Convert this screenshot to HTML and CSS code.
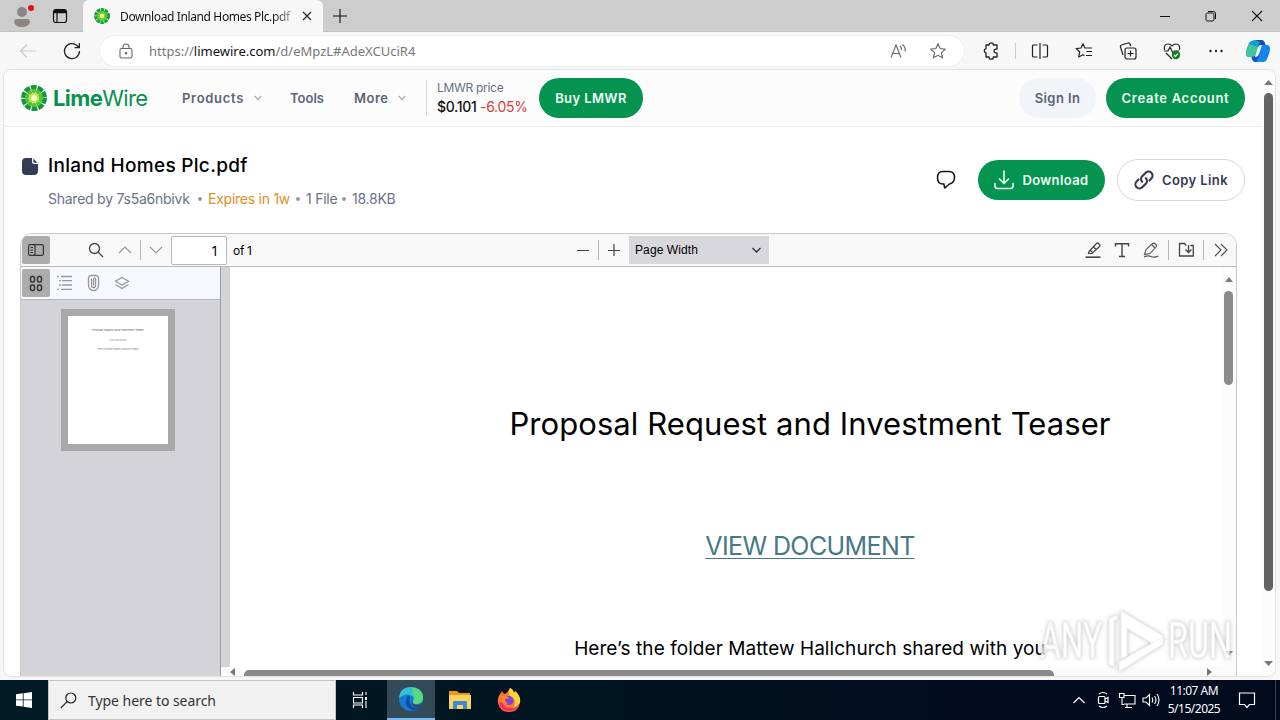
FILE: index.html
```html
<!DOCTYPE html>
<html lang="en">
<head>
    <meta charset="UTF-8">
    <meta name="viewport" content="width=device-width, initial-scale=1.0">
    <title>Download Inland Homes Plc.pdf</title>
    <link rel="stylesheet" href="styles.css">
</head>
<body>

    <!-- Tab strip -->
    <div class="tabstrip">
        <svg class="profile" width="24" height="26" viewBox="0 0 24 26"><circle cx="11" cy="9" r="5" fill="#8b8583"/><path d="M3 19q0-3 3-3h10q3 0 3 3-1 5-8 5t-8-5z" fill="#8b8583"/><circle cx="20" cy="5" r="3" fill="#e0101c"/></svg>
        <svg class="tab-menu" width="16" height="16" viewBox="0 0 16 16" fill="none" stroke="#111" stroke-width="1.2"><rect x="1.5" y="1.5" width="13" height="13" rx="2.5"/><path d="M5 5v9" /><path d="M2 3.500h12" stroke-width="3.500"/></svg>
        <div class="tab">
            <svg class="lime" width="16" height="16" viewBox="0 0 26 26"><circle cx="13" cy="13" r="10" fill="#c8ee90"/><circle cx="13" cy="13" r="9.500" fill="none" stroke="#18a03f" stroke-width="7" stroke-dasharray="4.970 1"/><circle cx="13" cy="13" r="6" fill="none" stroke="#5ccb1c" stroke-width="5" stroke-dasharray="2.970 .8"/><circle cx="13" cy="13" r="3.500" fill="#f0f79a"/></svg>
            <span class="tab-title">Download Inland Homes Plc.pdf</span>
            <svg width="10" height="10" viewBox="0 0 10 10" stroke="#222" stroke-width="1.2"><path d="M1 1l8 8M9 1l-8 8"/></svg>
        </div>
        <svg class="new-tab" width="14" height="14" viewBox="0 0 14 14" stroke="#111" stroke-width="1.1"><path d="M7 0v14M0 7h14"/></svg>
        <div class="window-buttons">
            <svg width="12" height="12" viewBox="0 0 12 12" fill="none" stroke="#111"><path d="M1 6.500h10"/></svg>
            <svg width="12" height="12" viewBox="0 0 12 12" fill="none" stroke="#111"><rect x="1" y="3" width="8" height="8" rx="1.500"/><path d="M3 1.500h5.500a2 2 0 0 1 2 2v5.500"/></svg>
            <svg width="12" height="12" viewBox="0 0 12 12" fill="none" stroke="#111" stroke-width="1.1"><path d="M1 1l10 10M11 1L1 11"/></svg>
        </div>
    </div>

    <!-- Address bar -->
    <div class="toolbar">
        <svg class="back" width="18" height="16" viewBox="0 0 18 16" fill="none" stroke="#c9c9c9" stroke-width="1.2"><path d="M17 8H1.500M8 1.500L1.500 8L8 14.500"/></svg>
        <svg class="reload" width="18" height="18" viewBox="0 0 18 18" fill="none" stroke="#222" stroke-width="1.3"><path d="M16.500 9A7.500 7.500 0 1 1 14 3.500L16 5.500M16.300 1v4.700h-4.700"/></svg>
        <div class="address">
            <svg width="14" height="16" viewBox="0 0 14 16" fill="none" stroke="#666" stroke-width="1.1"><rect x="1" y="5.500" width="12" height="9.500" rx="1.500"/><path d="M4 5.500V4a3 3 0 0 1 6 0v1.500"/><circle cx="7" cy="10.300" r=".7" fill="#666"/></svg>
            <span class="url">https://<b>limewire.com</b>/d/eMpzL#AdeXCUciR4</span>
            <svg class="read" width="17" height="16" viewBox="0 0 17 16" fill="none" stroke="#666" stroke-width="1.1"><path d="M1 14.500L6 2l5 12.500M2.800 10.500h6.400M10 3q2 1.500 1.500 4M12.500 1.500q3.500 3 2.500 7"/></svg>
            <svg width="16" height="16" viewBox="0 0 16 16" fill="none" stroke="#666" stroke-width="1.1"><path d="M8 .8l2.200 4.700 5.100.6-3.800 3.500 1 5.200L8 12.300l-4.500 2.500 1-5.200L.7 6.100l5.100-.6z"/></svg>
        </div>
        <div class="tools">
            <svg width="18" height="18" viewBox="0 0 18 18" fill="none" stroke="#222" stroke-width="1.3" stroke-linejoin="round"><path d="M4 3h3a2.200 2.200 0 0 1 4.400 0H15v4.200h-1.200a1.800 1.800 0 0 0 0 3.600H15V15h-3.600a2.200 2.200 0 0 1-4.400 0H4v-4a2.200 2.200 0 0 1 0-4.300z"/></svg>
            <i class="tool-line"></i>
            <svg width="18" height="18" viewBox="0 0 18 18" fill="none" stroke="#222" stroke-width="1.2"><path d="M6.500 3h-4q-1 0-1 1v10q0 1 1 1h4M11.500 3h4q1 0 1 1v10q0 1-1 1h-4M9 1v16"/></svg>
            <svg width="18" height="18" viewBox="0 0 18 18" fill="none" stroke="#222" stroke-width="1.2" stroke-linejoin="round"><path d="M11 6h-1.200L8 1.800 6 6l-4.800.6 3.500 3.400-1 5L8 12.700l1.500.9M11 6h6M11.500 9.500H17M11 13.500h6"/></svg>
            <svg width="18" height="18" viewBox="0 0 18 18" fill="none" stroke="#222" stroke-width="1.2"><rect x="6" y="6" width="11" height="11" rx="2"/><path d="M11.500 8.500v6M8.500 11.500h6M4 13L1.500 5Q1 3.500 2.500 3L9 1q1.500-.5 2 1l.7 2"/></svg>
            <svg width="18" height="18" viewBox="0 0 18 18" fill="none" stroke="#222" stroke-width="1.2"><path d="M1.500 8Q.5 2 5 2q2.500 0 4 2 1.500-2 4-2 4.500 0 3.500 6M1 9h4l2-4 3 6 1.500-2H16M3 11l6 6"/><circle cx="13" cy="13" r="4.200" fill="#16821c" stroke="none"/><path d="M11 13l1.500 1.500L15 11.700" stroke="#fff"/></svg>
            <svg width="18" height="18" viewBox="0 0 18 18" fill="#222"><circle cx="3.500" cy="9" r="1.200"/><circle cx="9" cy="9" r="1.200"/><circle cx="14.500" cy="9" r="1.200"/></svg>
            <svg class="copilot" width="24" height="24" viewBox="0 0 24 24"><path d="M6 2Q7 1 9 1h8q-2 1-3 4l-3 9q-1 4-4 4H3q-3 0-3-4 0-2 1-5l2-5q1-2 3-2z" fill="#159bdc"/><path d="M3 5L0 13q-1 5 3 5h3q3 0 4-4l2-6z" fill="#42c6a0"/><path d="M9 1h7q2 0 3 3l.5 2H16q-3 0-4 2l2-5z" fill="#164eb0"/><path d="M18 6h3q3 0 3 4 0 2-1 5l-2 5q-1 3-4 3H9q-2 0-3-3l-.4-2q4 0 5.400-4l2-6q1-2 5-2z" fill="#1385ed"/><path d="M5.500 18q5 0 6-4l1-3 1.500 3-2 6q-1 3-3 3-3-1-3.500-5z" fill="#1654ce"/><path d="M12 8q1-2 4-2l-3 9q-1 3-4 3z" fill="#f4fcff"/></svg>
        </div>
    </div>

    <!-- Web page -->
    <div class="frame">
        <div class="site">
            <div class="header">
                <div class="logo">
                    <svg width="26" height="26" viewBox="0 0 26 26"><circle cx="13" cy="13" r="11" fill="#d9f3b4"/><circle cx="13" cy="13" r="9.500" fill="none" stroke="#129643" stroke-width="7" stroke-dasharray="4.970 1"/><circle cx="13" cy="13" r="7" fill="none" stroke="#5ac526" stroke-width="4" stroke-dasharray="3.500 .898" stroke-dashoffset="-.100"/><circle cx="13" cy="13" r="4.500" fill="#b6e84c"/><circle cx="13" cy="13" r="3" fill="#fbfcc8"/></svg>
                    <span class="logo-text"><b>Lime</b>Wire</span>
                </div>
                <div class="nav">
                    <a class="nav-products">Products</a>
                    <svg width="8" height="6" viewBox="0 0 8 6" fill="none" stroke="#a5a9b3" stroke-width="1.2"><path d="M.8 1L4 4.500 7.200 1"/></svg>
                    <a class="nav-tools">Tools</a>
                    <a class="nav-more">More</a>
                    <svg width="8" height="6" viewBox="0 0 8 6" fill="none" stroke="#a5a9b3" stroke-width="1.2"><path d="M.8 1L4 4.500 7.200 1"/></svg>
                </div>
                <div class="price">
                    <div class="price-label">LMWR price</div>
                    <div class="price-value">$0.101 <span>-6.05%</span></div>
                </div>
                <button class="btn buy">Buy LMWR</button>
                <button class="btn sign-in">Sign In</button>
                <button class="btn create">Create Account</button>
            </div>

            <div class="file-row">
                <svg class="file-icon" width="16" height="17" viewBox="0 0 16 17"><path d="M4 0h6v3.500Q10 6 12.500 6H16v7q0 4-4 4H4q-4 0-4-4V4q0-4 4-4z" fill="#333c54"/><path d="M11.300.5l4.200 4.200h-3q-1.200 0-1.200-1.200z" fill="#333c54"/></svg>
                <div class="file-info">
                    <h1>Inland Homes Plc.pdf</h1>
                    <p><span class="by">Shared by 7s5a6nbivk</span><i></i><span class="expires">Expires in 1w</span><i></i><span class="count">1 File</span><i></i><span class="size">18.8KB</span></p>
                </div>
                <svg class="comment" width="20" height="20" viewBox="0 0 20 20" fill="none" stroke="#111" stroke-width="1.5"><path d="M7 1.500h6q5.500 0 5.500 6 0 5-5 6.500-2 1.500-4.500 4-1-1.300-1-4H7q-5.500 0-5.500-6.300T7 1.500z" stroke-linejoin="round"/></svg>
                <button class="btn download"><svg width="20" height="20" viewBox="0 0 20 20" fill="none" stroke="#e6fff2" stroke-width="1.6" stroke-linecap="round"><path d="M10 1v12M5.500 9L10 13.300 14.500 9M1 13.500v2.500q0 2.500 2.500 2.500h13q2.500 0 2.500-2.500v-2.500"/></svg><span>Download</span></button>
                <button class="btn copy"><svg width="20" height="20" viewBox="0 0 20 20" fill="none" stroke="#333b50" stroke-width="2.1" stroke-linecap="round"><path d="M8.200 11.800a4 4 0 0 1 0-5.600l3.500-3.500a4 4 0 0 1 5.700 5.700l-2 2M11.800 8.200a4 4 0 0 1 0 5.600l-3.500 3.500a4 4 0 0 1-5.700-5.700l2-2"/></svg><span>Copy Link</span></button>
            </div>

            <!-- PDF viewer -->
            <div class="viewer">
                <div class="pdf-toolbar">
                    <div class="toggle"><svg width="16" height="12" viewBox="0 0 16 12" fill="none" stroke="#333" stroke-width="1.2"><rect x=".6" y=".6" width="14.800" height="10.800" rx="1.500"/><path d="M7 1v10M2.500 3.500h2.500M2.500 6h2.500M2.500 8.500h2.500"/></svg></div>
                    <svg class="find" width="16" height="16" viewBox="0 0 16 16" fill="none" stroke="#444" stroke-width="1.3"><circle cx="6.500" cy="6.500" r="5"/><path d="M10 10l5 5"/></svg>
                    <svg class="prev" width="14" height="8" viewBox="0 0 14 8" fill="none" stroke="#999" stroke-width="1.2"><path d="M1 7l6-6 6 6"/></svg>
                    <i class="line"></i>
                    <svg class="next" width="14" height="8" viewBox="0 0 14 8" fill="none" stroke="#999" stroke-width="1.2"><path d="M1 1l6 6 6-6"/></svg>
                    <div class="page-number">1</div>
                    <span class="page-count">of 1</span>
                    <svg class="minus" width="12" height="12" viewBox="0 0 12 12" stroke="#444" stroke-width="1.2"><path d="M0 6.500h12"/></svg>
                    <i class="line zoom-line"></i>
                    <svg class="plus" width="12" height="12" viewBox="0 0 12 12" stroke="#444" stroke-width="1.2"><path d="M0 6.500h12M6 0v12"/></svg>
                    <div class="zoom"><span>Page Width</span><svg width="9" height="6" viewBox="0 0 9 6" fill="none" stroke="#333" stroke-width="1.3"><path d="M.5 1l4 4 4-4"/></svg></div>
                    <div class="edit-tools">
                        <svg width="16" height="16" viewBox="0 0 16 16" fill="none" stroke="#444" stroke-width="1.200"><path d="M4 9.500l7.500-8q1-1 2 0l1 1q1 1 0 2L7 11.500H3.500zM5 8l3 3M8.500 5l3 3"/><path d="M.500 15.200h15" stroke-width="1.600"/></svg>
                        <svg width="16" height="16" viewBox="0 0 16 16" fill="none" stroke="#444" stroke-width="1.400"><path d="M1.500 4.500V1.700h13v2.800M8 2v12.500M5 14.500h6"/></svg>
                        <svg width="16" height="16" viewBox="0 0 16 16" fill="none" stroke="#555" stroke-width="1.100"><path d="M1.500 12.500l1.500-5 6.500-6q1.500-1 3 .5t.5 3L7 11.500zM9 3l3 3M1 15q4-2 7-.5t7.500-.5"/></svg>
                        <i class="line"></i>
                        <svg width="16" height="16" viewBox="0 0 16 16" fill="none" stroke="#444" stroke-width="1.300"><path d="M8 3.500L6.500 1.500h-5v12.500h13.800V3.500h-3M10.500 3v7M7.500 7.500l3 3 3-3"/></svg>
                        <i class="line"></i>
                        <svg width="16" height="16" viewBox="0 0 16 16" fill="none" stroke="#555" stroke-width="1.200"><path d="M2 2l6 6-6 6M8 2l6 6-6 6"/></svg>
                    </div>
                </div>

                <div class="viewer-body">
                    <div class="sidebar">
                        <div class="side-tools">
                            <div class="toggle"><svg width="14" height="17" viewBox="0 0 14 17" fill="none" stroke="#333" stroke-width="1.500"><rect x="1.500" y="1.500" width="4" height="5.500" rx="1.500"/><rect x="8.500" y="1.500" width="4" height="5.500" rx="1.500"/><rect x="1.500" y="10" width="4" height="5.500" rx="1.500"/><rect x="8.500" y="10" width="4" height="5.500" rx="1.500"/></svg></div>
                            <svg width="16" height="16" viewBox="0 0 16 16" stroke="#999" stroke-width="1.300"><path d="M1 1.500h2M5 1.500h11M3 5.700h2M6 5.700h10M3 10h2M6 10h10M1 14.300h2M5 14.300h11"/></svg>
                            <svg width="16" height="18" viewBox="0 0 16 18" fill="none" stroke="#999" stroke-width="1.300" stroke-linecap="round"><path d="M3.500 4.500v7a5 5 0 0 0 10 0V4.500q0-3-3-3H6.800q-3.300 0-3.300 3M6.500 5v6.500a2 2 0 0 0 4 0V5q0-1-1-1M8.500 5v6"/></svg>
                            <svg width="16" height="16" viewBox="0 0 16 16" fill="none" stroke="#999" stroke-width="1.300"><path d="M8 2.500l6.500 3.800L8 10 1.500 6.300zM1.500 9.500L8 13.500l6.500-4"/></svg>
                        </div>
                        <div class="thumb-list">
                            <div class="thumb">
                                <div class="thumb-title">Proposal Request and Investment Teaser</div>
                                <div class="thumb-link">VIEW DOCUMENT</div>
                                <div class="thumb-text">Here’s the folder Mattew Hallchurch shared</div>
                            </div>
                        </div>
                    </div>
                    <div class="splitter"></div>
                    <div class="doc">
                        <div class="doc-main">
                            <div class="page">
                                <h2>Proposal Request and Investment Teaser</h2>
                                <a>VIEW DOCUMENT</a>
                                <p>Here’s the folder Mattew Hallchurch shared with you</p>
                            </div>
                            <div class="doc-scroll">
                                <svg width="8" height="5" viewBox="0 0 8 5"><path d="M0 5l4-5 4 5z" fill="#7b7b7b"/></svg>
                                <div class="doc-handle"></div>
                                <svg class="down" width="8" height="5" viewBox="0 0 8 5"><path d="M0 0h8L4 5z" fill="#777"/></svg>
                            </div>
                        </div>
                        <div class="doc-hscroll">
                            <svg width="5" height="8" viewBox="0 0 5 8"><path d="M5 0v8L0 4z" fill="#777"/></svg>
                            <div class="h-handle"></div>
                            <svg class="right" width="5" height="8" viewBox="0 0 5 8"><path d="M0 0v8l5-4z" fill="#777"/></svg>
                        </div>
                    </div>
                </div>
            </div>
        </div>
        <div class="page-scroll">
            <svg width="9" height="5" viewBox="0 0 9 5"><path d="M0 5l4.500-5L9 5z" fill="#777"/></svg>
            <div class="handle"></div>
            <svg class="down" width="9" height="5" viewBox="0 0 9 5"><path d="M0 0h9L4.500 5z" fill="#777"/></svg>
        </div>
    </div>

    <svg class="watermark" width="204" height="72" viewBox="0 0 204 72">
        <g fill="#fff" stroke="#ececec" stroke-width="1">
            <text x="5" y="54" textLength="62" lengthAdjust="spacingAndGlyphs">ANY</text>
            <text x="133" y="54" textLength="64" lengthAdjust="spacingAndGlyphs">RUN</text>
            <path d="M86 7l42 25v6l-6 4-30-18v28l-6 3z"/>
            <path d="M82 11v4l-3 2v46l-5-3V15z"/>
            <path d="M84 58l44-25v7L88 65l-4 3z"/>
        </g>
    </svg>

    <!-- Windows taskbar -->
    <div class="taskbar">
        <div class="start"><svg width="16" height="16" viewBox="0 0 16 16" fill="#fff"><path d="M0 2.200l6.800-.9v6.200H0zM7.600 1.200L16 0v7.500H7.600zM0 8.300h6.800v6.300L0 13.700zM7.600 8.300H16V16l-8.400-1.200z"/></svg></div>
        <div class="search">
            <svg width="17" height="17" viewBox="0 0 17 17" fill="none" stroke="#222" stroke-width="1.200"><circle cx="10.800" cy="6" r="5"/><path d="M7.200 9.600L.8 16"/></svg>
            <span>Type here to search</span>
        </div>
        <div class="app task-view"><svg width="16" height="16" viewBox="0 0 16 16" fill="none" stroke="#fff" stroke-width="1.100"><path d="M1.500 0v3h9V0M1.500 16v-3h9v3M1.500 5.500h9v5.500h-9zM14 0v3M14 9v7"/><path d="M13 5h2v3h-2z" fill="#fff" stroke="none"/></svg></div>
        <div class="app active">
            <svg width="24" height="24" viewBox="0 0 24 24"><circle cx="12" cy="12" r="12" fill="#157ad0"/><path d="M0 11Q1 0 12 0q11 0 12 10 0 7-7 7-4 0-3-3 2-3-1-5-5-4-13 2z" fill="#35c1d3"/><path d="M14 .5q10 2 10 10 0 6.500-7 6.500-4 0-3-3 4-4-1-8z" fill="#58dc7c"/><path d="M9 9q-5 8 2 13 5 3 10-2-4 2-8-1-4-3-2-8 0-2-2-2z" fill="#0b4da2"/><path d="M13.500 14q-.5 4 5 4 3 0 5-2l-2 4q-4 1-7-1t-1-5z" fill="#334b59"/></svg>
        </div>
        <div class="app"><svg width="22" height="20" viewBox="0 0 22 20"><path d="M0 1h8l2 2h11v4H0z" fill="#e89a13"/><path d="M0 5h22v14H0z" fill="#fbd25e"/><path d="M4 19v-7q0-1 1-1h12q1 0 1 1v7h-4v-4H8v4z" fill="#3a8bd3"/></svg></div>
        <div class="app"><svg width="24" height="24" viewBox="0 0 24 24"><path d="M3 6l2-3 2 3q4-1 6-6 3 1 4 5l1-2q6 5 5 12-2 9-11 9T1 15Q0 10 3 6z" fill="#ff7433"/><path d="M13 0q3 1 4 5l1-2q6 5 5 11-2 5-7 6 5-8-3-12-3-3 0-8z" fill="#ffd438"/><path d="M2 15q2 8 10 8t10-7q-3 5-9 4-6 0-8-6z" fill="#f72b68"/><circle cx="12" cy="12.500" r="4.500" fill="#8540dd"/><path d="M4 8q5-1 8 2-2 1-4 1 0 4 4 4-5 2-7-2z" fill="#ff8b24"/></svg></div>
        <div class="tray">
            <svg class="up" width="12" height="8" viewBox="0 0 12 8" fill="none" stroke="#fff" stroke-width="1.200"><path d="M.5 7L6 1.500 11.500 7"/></svg>
            <svg width="18" height="18" viewBox="0 0 18 18" fill="none" stroke="#fff" stroke-width="1.200"><rect x="4.500" y="5.500" width="6.500" height="7" rx="1"/><path d="M11 8l3-1.500v5L11 10M5 3q4-3 8 0M5 15q4 3 8 0"/></svg>
            <svg width="18" height="18" viewBox="0 0 18 18" fill="none" stroke="#fff" stroke-width="1.100"><path d="M6 4.500h11v8.500H6M4 7v6.500h2M9 13v3M7 16.500h7M1.500 2.500h4.500v4H1.500z"/></svg>
            <svg width="18" height="18" viewBox="0 0 18 18" fill="none" stroke="#fff" stroke-width="1.100"><path d="M1 7h3l3.500-3.500v11L4 11H1zM10 6.500q1.500 2.500 0 5M12.500 5q3 4 0 8M15 3q4 6 0 12"/></svg>
            <div class="clock"><div class="time">11:07 AM</div><div class="date">5/15/2025</div></div>
            <svg class="notice" width="18" height="18" viewBox="0 0 18 18" fill="none" stroke="#fff" stroke-width="1.200"><path d="M1.500 2h15v11.500h-5L9 16.500 6.500 13.500h-5z"/></svg>
        </div>
    </div>

</body>
</html>
```
FILE: styles.css
```css
* {
    box-sizing: border-box;
}
body {
    margin: 0;
    width: 1280px;
    height: 720px;
    overflow: hidden;
    display: flex;
    flex-direction: column;
    position: relative;
    background: #f7f7f7;
    font-family: "Inter", "Liberation Sans", sans-serif;
    white-space: nowrap;
}
svg {
    display: block;
    flex: none;
}
/* Browser chrome */
.tabstrip {
    height: 32px;
    flex: none;
    display: flex;
    align-items: center;
    background: #cdcdcd;
    border-bottom: 1px solid #c2c2c2;
    font-family: "Noto Sans", sans-serif;
}
.profile {
    margin-left: 11px;
}
.tab-menu {
    margin-left: 17px;
}
.tab {
    width: 240px;
    height: 32px;
    margin: 0 0 -1px 15px;
    padding: 0 11px;
    display: flex;
    align-items: center;
    background: #f7f7f7;
    border-radius: 6px 6px 0 0;
}
.tab-title {
    width: 174px;
    margin: 0 9px 0 10px;
    font-size: 12px;
    letter-spacing: -0.38px;
    background: linear-gradient(90deg, #111 88%, #aaa);
    background-clip: text;
    color: transparent;
}
.new-tab {
    margin-left: 10px;
}
.window-buttons {
    margin-left: auto;
    margin-right: 17px;
    display: flex;
    gap: 34px;
}
.toolbar {
    height: 37px;
    padding-top: 1px;
    flex: none;
    display: flex;
    align-items: center;
    background: #f7f7f7;
}
.back {
    margin-left: 19px;
}
.reload {
    margin-left: 26px;
}
.address {
    width: 864px;
    height: 30px;
    margin-left: 19px;
    padding: 0 18px 0 19px;
    display: flex;
    align-items: center;
    background: #fff;
    border-radius: 15px;
    box-shadow: 0 0 2px #ddd;
}
.url {
    margin-left: 16px;
    font-family: "Noto Sans", sans-serif;
    font-size: 13px;
    color: #777;
}
.url b {
    font-weight: normal;
    color: #111;
}
.read {
    margin-left: auto;
    margin-right: 23px;
}
.tools {
    margin-left: 18px;
    display: flex;
    align-items: center;
    gap: 26px;
}
.tool-line {
    width: 1px;
    height: 16px;
    margin: 0 -4px 0 -10px;
    background: #ccc;
}
.tools svg:nth-of-type(1) {
    margin-right: -1px;
}
.tools svg:nth-of-type(2) {
    margin-left: -7px;
}
.tools .copilot {
    margin-left: -5px;
}
/* Page frame */
.frame {
    width: 1273px;
    height: 608px;
    margin-left: 3px;
    flex: none;
    display: flex;
    overflow: hidden;
    background: #fff;
    border: 1px solid #e2e2e2;
    border-radius: 8px;
}
.site {
    width: 1258px;
    display: flex;
    flex-direction: column;
}
.page-scroll {
    width: 13px;
    padding: 10px 2px 10px 1px;
    display: flex;
    flex-direction: column;
    align-items: center;
    background: #fcfcfc;
}
.handle {
    width: 9px;
    height: 498px;
    margin-top: 8px;
    border-radius: 5px;
    background: #636363;
}
.down {
    margin-top: auto;
}
.header {
    height: 57px;
    flex: none;
    display: flex;
    align-items: center;
    background: #fcfcfc;
    border-bottom: 1px solid #ebecee;
    padding: 0 17px;
}
.logo {
    width: 161px;
    display: flex;
    align-items: center;
    color: #0a9150;
}
.logo-text {
    margin-left: 6px;
    font-size: 22px;
    letter-spacing: -0.6px;
}
.nav {
    width: 244px;
    display: flex;
    align-items: center;
    font-size: 13px;
    font-weight: 600;
    color: #5c6478;
}
.nav-products {
    width: 72px;
    letter-spacing: 0.7px;
}
.nav-tools {
    width: 64px;
    margin-left: 28px;
}
.nav-more {
    width: 44px;
    letter-spacing: 0.5px;
}
.price {
    width: 113px;
    height: 36px;
    padding-left: 10px;
    border-left: 1px solid #d5d7db;
    color: #111;
}
.price-label {
    font-size: 12px;
    line-height: 16px;
    color: #687083;
    letter-spacing: -0.3px;
}
.price-value {
    font-size: 14px;
    line-height: 21px;
    letter-spacing: -0.3px;
    font-weight: 500;
}
.price-value span {
    color: #d93a3a;
    font-weight: normal;
}
.btn {
    height: 40px;
    padding: 0;
    flex: none;
    display: flex;
    align-items: center;
    justify-content: center;
    border: none;
    border-radius: 21px;
    background: #05944f;
    color: #f0fff6;
    font-family: inherit;
    font-size: 13px;
    font-weight: 600;
    letter-spacing: 0.4px;
}
.buy {
    width: 104px;
}
.sign-in {
    width: 77px;
    margin-left: auto;
    background: #f1f4f8;
    color: #586277;
}
.create {
    width: 139px;
    margin-left: 10px;
    letter-spacing: 0.7px;
}
.file-row {
    height: 106px;
    flex: none;
    display: flex;
    align-items: center;
    padding: 0 17px 0 18px;
}
.file-icon {
    margin-bottom: 28px;
}
.file-info {
    margin: 2px auto 0 10px;
}
.file-info h1 {
    margin: 0;
    font-size: 19px;
    line-height: 26px;
    font-weight: 500;
    letter-spacing: 0.3px;
    color: #000;
}
.file-info p {
    margin: 10px 0 0;
    display: flex;
    align-items: center;
    font-size: 14px;
    line-height: 20px;
    letter-spacing: -0.25px;
    color: #687286;
}
.file-info p i {
    width: 4px;
    height: 4px;
    margin: 0 6px;
    border-radius: 2px;
    background: #999;
}
.by {
    width: 144px;
}
.file-info .expires {
    width: 82px;
    color: #dd911e;
}
.count {
    width: 30px;
}
.comment {
    margin-right: 22px;
}
.download {
    width: 127px;
    gap: 8px;
}
.copy {
    width: 128px;
    height: 42px;
    margin-left: 12px;
    gap: 8px;
    background: #fff;
    border: 1px solid #d8d8dc;
    color: #333b50;
}
/* PDF viewer */
.viewer {
    width: 1217px;
    height: 450px;
    margin-left: 16px;
    flex: none;
    overflow: hidden;
    border: 1px solid #c9c9ca;
    border-radius: 12px 12px 0 0;
}
.pdf-toolbar {
    height: 33px;
    padding-left: 1px;
    display: flex;
    align-items: center;
    background: #f8f8f9;
    border-bottom: 1px solid #b9b9bb;
}
.toggle {
    width: 28px;
    height: 28px;
    display: flex;
    align-items: center;
    justify-content: center;
    background: #acacac;
    border-radius: 2px;
}
.find {
    margin-left: 38px;
}
.prev {
    margin-left: 14px;
}
.line {
    width: 1px;
    height: 20px;
    background: #b5b5b7;
}
.pdf-toolbar > .line {
    margin-left: 8px;
}
.pdf-toolbar > .zoom-line {
    margin-left: 9px;
}
.next {
    margin-left: 8px;
}
.page-number {
    width: 56px;
    height: 29px;
    margin-left: 8px;
    padding-right: 9px;
    border: 1px solid #b8b8bb;
    border-radius: 2px;
    background: #fff;
    text-align: right;
    font-size: 13px;
    line-height: 28px;
}
.page-count {
    width: 344px;
    margin-left: 6px;
    font-size: 12px;
    letter-spacing: -0.3px;
}
.plus {
    margin-left: 9px;
}
.zoom {
    width: 140px;
    height: 28px;
    margin-left: 9px;
    padding: 0 8px 0 6px;
    display: flex;
    align-items: center;
    justify-content: space-between;
    background: #d7d7dc;
    font-family: "Liberation Sans", sans-serif;
    font-size: 12px;
    letter-spacing: 0.1px;
}
.edit-tools {
    margin-left: auto;
    margin-right: 7px;
    display: flex;
    align-items: center;
    gap: 13px;
}
.edit-tools .line {
    margin: 0 -4px;
}
.viewer-body {
    height: 409px;
    display: flex;
}
.sidebar {
    width: 200px;
    flex: none;
    background: #d4d4d8;
    border-right: 1px solid #9b9b9e;
}
.side-tools {
    height: 33px;
    padding-left: 1px;
    display: flex;
    align-items: center;
    gap: 13px;
    background: #f5f8fc;
    border-bottom: 1px solid #b8b8bc;
}
.side-tools .toggle {
    margin-right: -7px;
}
.thumb-list {
    padding: 9px 0 0 40px;
}
.thumb {
    width: 114px;
    height: 142px;
    padding-top: 9px;
    border: 7px solid #a9a9aa;
    background: #fff;
    text-align: center;
    font-size: 2.7px;
    line-height: 10px;
    color: #555;
}
.thumb-link {
    font-size: 2px;
    color: #888;
}
.thumb-text {
    font-size: 2px;
    line-height: 8px;
    color: #777;
}
.splitter {
    width: 9px;
    height: 400px;
    flex: none;
    background: #d4d4d7;
}
.doc {
    width: 1006px;
    display: flex;
    flex-direction: column;
}
.doc-main {
    height: 400px;
    display: flex;
}
.page {
    width: 992px;
    padding: 133px 0 0 168px;
    display: flex;
    flex-direction: column;
    align-items: center;
    flex: none;
}
.page h2 {
    margin: 0;
    font-size: 31px;
    line-height: 48px;
    font-weight: normal;
    letter-spacing: 0.08px;
}
.page a {
    margin-top: 78px;
    font-size: 25px;
    line-height: 40px;
    letter-spacing: -0.6px;
    color: #467886;
    text-decoration: underline;
    text-decoration-thickness: 1px;
    text-underline-offset: 3px;
}
.page p {
    margin: 68px 0 0;
    font-size: 19px;
    line-height: 30px;
    letter-spacing: 0.06px;
}
.doc-scroll {
    width: 14px;
    padding: 10px 3px 11px 2px;
    display: flex;
    flex-direction: column;
    align-items: center;
    background: #fcfcfc;
}
.doc-handle {
    width: 9px;
    height: 94px;
    margin-top: 9px;
    border-radius: 5px;
    background: #8b8b8b;
}
.doc-hscroll {
    height: 9px;
    margin-left: -9px;
    padding-left: 9px;
    display: flex;
    align-items: center;
    background: #fbfbfb;
}
.h-handle {
    width: 810px;
    height: 6px;
    margin-left: 9px;
    align-self: flex-end;
    border-radius: 5px 5px 0 0;
    background: #898989;
}
.right {
    margin-left: 153px;
}
.watermark {
    position: absolute;
    left: 1035px;
    top: 604px;
    opacity: 0.75;
    filter: drop-shadow(0 0 2px #aaa);
    font-family: "Roboto", sans-serif;
    font-size: 50px;
}
/* Taskbar */
.taskbar {
    height: 40px;
    margin-top: auto;
    flex: none;
    display: flex;
    align-items: center;
    background: linear-gradient(90deg, #001a23, #001420 45%, #020a1e 80%);
    color: #fff;
    font-family: "Noto Sans", sans-serif;
}
.start, .app {
    width: 48px;
    height: 40px;
    display: flex;
    align-items: center;
    justify-content: center;
}
.app {
    width: 49px;
}
.task-view {
    width: 48px;
    margin-right: 3px;
}
.active {
    width: 48px;
    background: #334b59;
    border-bottom: 2px solid #76b9ed;
}
.search {
    width: 288px;
    height: 40px;
    padding-left: 11px;
    display: flex;
    align-items: center;
    gap: 11px;
    background: #f1f1f1;
    border: 1px solid #c5c5c5;
    color: #333;
    font-size: 14px;
    letter-spacing: -0.05px;
}
.tray {
    margin-left: auto;
    margin-right: 4px;
    padding-right: 6px;
    height: 40px;
    display: flex;
    align-items: center;
    gap: 6px;
    border-right: 1px solid #3c4350;
}
.up {
    margin-right: 3px;
}
.clock {
    width: 56px;
    text-align: center;
    font-size: 12px;
    line-height: 18px;
    letter-spacing: -0.5px;
}
.notice {
    margin: 0 13px 0 10px;
}
```
